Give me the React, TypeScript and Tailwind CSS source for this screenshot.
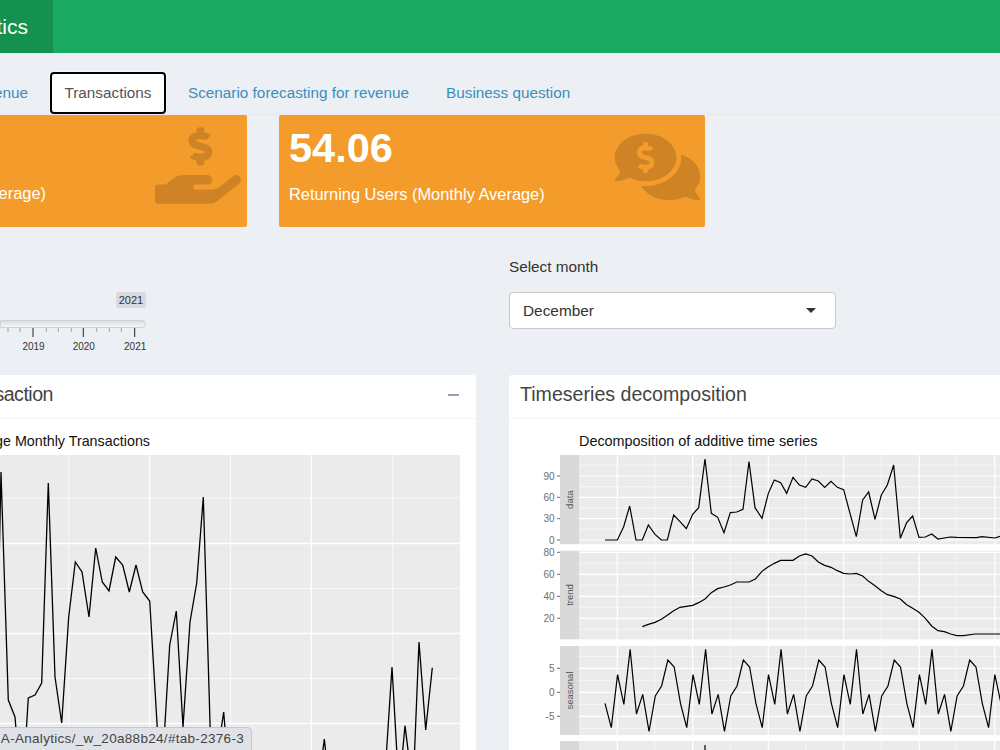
import { FaCommentsDollar, FaHandHoldingUsd } from 'react-icons/fa';

type Pt = [number, number];

const sans = 'font-["Liberation_Sans",Arial,sans-serif]';

// traced from the picture, page coordinates
const monthly: Pt[] = [
  [-5, 760], [1, 472], [8.3, 700], [15, 717], [21, 790], [26, 735], [28.3, 698], [35, 695], [41.7, 683], [48.3, 483],
  [55, 677], [61.7, 723], [68.7, 617], [75.3, 562], [82, 572], [89, 617], [95.7, 548], [102.3, 582], [109, 591],
  [115.7, 557], [122.7, 565], [129.3, 592], [136, 565], [142.7, 592], [149.7, 601], [161, 790], [169.7, 645],
  [176.3, 611], [183, 727], [190, 622], [196.7, 583], [203.3, 497], [212, 790], [223.7, 712], [230, 790],
  [318, 790], [324.3, 739], [330, 790], [384, 790], [392, 667], [399, 790], [405, 725.7], [413, 790], [419, 642],
  [425.7, 730], [432.3, 667.7],
];

// these two are in 3x units, from x=510 and y=430
const dataLine: Pt[] = [
  [285, 330], [322, 330], [341, 290], [359, 228], [378, 330], [397, 330], [415, 285], [435, 313], [454, 330], [472, 330],
  [491, 255], [510, 275], [529, 296], [548, 253], [566, 233], [585, 87], [604, 250], [623, 262], [642, 308], [661, 248],
  [680, 246], [699, 238], [717, 95], [735, 233], [756, 265], [775, 190], [793, 150], [812, 158], [830, 190], [849, 142],
  [868, 165], [887, 172], [906, 147], [925, 153], [944, 172], [963, 154], [982, 172], [1001, 179], [1020, 250], [1039, 320],
  [1058, 210], [1076, 186], [1095, 268], [1114, 195], [1132, 165], [1151, 105], [1171, 325], [1190, 278], [1208, 258],
  [1227, 322], [1246, 321], [1265, 312], [1284, 327], [1320, 321], [1340, 322], [1400, 323], [1415, 320], [1455, 324], [1470, 319],
];

const trendLine: Pt[] = [
  [397, 590], [415, 583], [435, 577], [454, 568], [472, 556], [491, 542], [510, 532], [529, 529], [548, 526], [566, 518],
  [585, 507], [604, 488], [623, 476], [642, 471], [661, 465], [680, 456], [717, 456], [736, 447], [756, 424], [775, 410],
  [793, 400], [812, 391], [849, 391], [868, 378], [887, 372], [906, 378], [925, 396], [944, 406], [963, 412], [982, 422],
  [1001, 430], [1020, 432], [1039, 430], [1058, 438], [1076, 454], [1095, 467], [1114, 482], [1132, 494], [1151, 499],
  [1171, 507], [1190, 524], [1208, 535], [1227, 547], [1246, 565], [1265, 588], [1284, 602], [1303, 605], [1322, 612],
  [1340, 617], [1360, 617], [1395, 612], [1470, 612],
];

const seasonStep: number[] = [340, 413, 254, 343, 178, 372, 313, 424, 318, 288, 210, 231];
const seasonal: Pt[] = Array.from({ length: 66 }, (_, i) => [605 + i * 6.288, 590 + seasonStep[i % 12] / 3]);

const toPage = (list: Pt[]): string => list.map(([x, y]) => `${510 + x / 3},${430 + y / 3}`).join(' ');

const toPts = (list: Pt[]): string => list.map(([x, y]) => `${x},${y}`).join(' ');

const majorX = [617.3, 692.7, 768.3, 843.7, 919.3, 994.7];
const minorX = [654.7, 730.3, 805.7, 881.3, 956.3];

type Facet = { name: string; top: number; bottom: number; major: [number, string][]; minor: number[] };

const facets: Facet[] = [
  {
    name: 'data',
    top: 455,
    bottom: 544.3,
    major: [[476, '90'], [497.3, '60'], [518.7, '30'], [540, '0']],
    minor: [465.3, 486.7, 508, 529.3],
  },
  {
    name: 'trend',
    top: 550.7,
    bottom: 639.3,
    major: [[552.3, '80'], [574.3, '60'], [596.3, '40'], [618.3, '20']],
    minor: [563.3, 585.3, 607.3, 629.3],
  },
  {
    name: 'seasonal',
    top: 646,
    bottom: 735,
    major: [[668.3, '5'], [692.3, '0'], [716.3, '-5']],
    minor: [656.3, 680.3, 704.3, 728.3],
  },
  { name: '', top: 741, bottom: 760, major: [], minor: [] },
];

function LeftChart() {
  return (
    <svg viewBox="0 455 460 295" className="block w-[460px] h-[295px]">
      <rect x="0" y="455" width="460" height="295" fill="#ebebeb" />
      {[498, 588.5, 678.5].map((y) => (
        <line key={y} x1="0" x2="460" y1={y} y2={y} stroke="#fff" strokeWidth="0.7" />
      ))}
      {[68.7, 230.5, 392.7].map((x) => (
        <line key={x} x1={x} x2={x} y1="455" y2="750" stroke="#fff" strokeWidth="0.7" />
      ))}
      {[543.5, 633.5, 723.5].map((y) => (
        <line key={y} x1="0" x2="460" y1={y} y2={y} stroke="#fff" strokeWidth="1.3" />
      ))}
      {[149.7, 311.3].map((x) => (
        <line key={x} x1={x} x2={x} y1="455" y2="750" stroke="#fff" strokeWidth="1.3" />
      ))}
      <polyline points={toPts(monthly)} fill="none" stroke="#000" strokeWidth="1.3" />
    </svg>
  );
}

function RightChart() {
  return (
    <svg viewBox="520 455 480 295" className={`block w-[480px] h-[295px] ${sans}`}>
      {facets.map((f) => (
        <g key={f.top}>
          <rect x="560" y={f.top} width="19" height={f.bottom - f.top} fill="#d9d9d9" />
          <rect x="579" y={f.top} width="421" height={f.bottom - f.top} fill="#ebebeb" />
          {f.minor.map((y) => (
            <line key={y} x1="579" x2="1000" y1={y} y2={y} stroke="#fff" strokeWidth="0.6" />
          ))}
          {minorX.map((x) => (
            <line key={x} x1={x} x2={x} y1={f.top} y2={f.bottom} stroke="#fff" strokeWidth="0.6" />
          ))}
          {f.major.map(([y, label]) => (
            <g key={label}>
              <line x1="579" x2="1000" y1={y} y2={y} stroke="#fff" strokeWidth="1.2" />
              <line x1="557" x2="560" y1={y} y2={y} stroke="#444" strokeWidth="0.8" />
              <text x="554.5" y={y + 3.5} textAnchor="end" fontSize="10" fill="#6f6f6f">
                {label}
              </text>
            </g>
          ))}
          {majorX.map((x) => (
            <line key={x} x1={x} x2={x} y1={f.top} y2={f.bottom} stroke="#fff" strokeWidth="1.2" />
          ))}
          {f.name && (
            <text
              transform={`translate(573 ${(f.top + f.bottom) / 2}) rotate(-90)`}
              textAnchor="middle"
              fontSize="9.5"
              fill="#555"
            >
              {f.name}
            </text>
          )}
        </g>
      ))}
      <polyline points={toPage(dataLine)} fill="none" stroke="#000" strokeWidth="1.2" />
      <polyline points={toPage(trendLine)} fill="none" stroke="#000" strokeWidth="1.2" />
      <polyline points={toPts(seasonal)} fill="none" stroke="#000" strokeWidth="1.2" />
      <polyline points="705,760 705,745" fill="none" stroke="#000" strokeWidth="1.2" />
    </svg>
  );
}

function SliderScale() {
  const major = [33, 83.3, 134.7];
  const minor = [8, 20, 46.3, 58.3, 71.3, 96.7, 109.3, 121.3];
  return (
    <svg viewBox="0 328 146 26" className={`block w-[146px] h-[26px] ${sans}`}>
      {minor.map((x) => (
        <line key={x} x1={x} x2={x} y1="328" y2="332" stroke="#8a8a8a" strokeWidth="0.8" />
      ))}
      {major.map((x) => (
        <line key={x} x1={x} x2={x} y1="328" y2="337" stroke="#222" strokeWidth="1" />
      ))}
      {['2019', '2020', '2021'].map((label, i) => (
        <text key={label} x={major[i] + 0.5} y="350" textAnchor="middle" fontSize="10" fill="#333">
          {label}
        </text>
      ))}
    </svg>
  );
}

export default function App() {
  return (
    <div className={`relative w-[1000px] h-[750px] overflow-hidden bg-[#ecf0f5] text-[#333] ${sans}`}>
      <header className="flex h-[53px] bg-[#1aa962]">
        <div className="flex justify-end items-center w-[53px] overflow-hidden bg-[#15914f] pr-[25px] shrink-0">
          <span className="text-[21px] font-light text-white whitespace-nowrap">Analytics</span>
        </div>
      </header>

      <nav className="flex h-[62px] pt-[18px] border-b border-[#e6e8eb] text-[15.3px] leading-[20px]">
        <div className="flex justify-end items-center w-[28px] overflow-hidden mr-[21px] shrink-0">
          <a className="text-[#3c8dbc] whitespace-nowrap">Revenue</a>
        </div>
        <a className="flex items-start h-[44px] w-[118px] justify-center rounded-t bg-[#ecf0f5] border border-[#f4f5f7] border-b-0 shrink-0">
          <span className="flex items-center justify-center w-[116px] h-[42px] bg-white rounded-[4px] border-2 border-black text-[#555]">
            Transactions
          </span>
        </a>
        <a className="ml-[21px] mt-[12px] text-[#3c8dbc] whitespace-nowrap">Scenario forecasting for revenue</a>
        <a className="ml-[37px] mt-[12px] text-[#3c8dbc] whitespace-nowrap">Business question</a>
      </nav>

      <section className="flex gap-x-[32px] h-[112px]">
        <div className="relative flex flex-col justify-end items-end w-[247px] rounded-r-[2px] bg-[#f39c2c] overflow-hidden shrink-0">
          <p className="mb-[24px] mr-[201px] text-[16.4px] leading-[20px] text-white whitespace-nowrap">Average)</p>
          <FaHandHoldingUsd className="absolute right-[6px] top-[10px] w-[86px] h-[81px] text-black/15" />
        </div>
        <div className="relative w-[426px] rounded-[2px] bg-[#f39c2c] text-white pl-[10px] shrink-0">
          <h3 className="mt-[10px] text-[41.5px] leading-[46px] font-bold">54.06</h3>
          <p className="mt-[13px] text-[16.4px] leading-[20px] whitespace-nowrap">Returning Users (Monthly Average)</p>
          <FaCommentsDollar className="absolute right-[0.5px] top-[13.5px] w-[95px] h-[76px] text-black/15" />
        </div>
      </section>

      <section className="grid grid-cols-[476px_1fr] gap-x-[33px] h-[148px]">
        <div className="pt-[65px]">
          <div className="flex justify-end w-[146px]">
            <span className="flex items-center justify-center w-[30px] h-[16px] rounded-[3px] bg-[#d8dadf] text-[11px] leading-none text-[#333]">
              2021
            </span>
          </div>
          <div className="mt-[12px] w-[146px] h-[8px] rounded-r-[4px] border border-[#d0d2d4] bg-gradient-to-b from-[#dcdee0] to-[#f6f6f6]" />
          <SliderScale />
        </div>
        <div className="pt-[30px]">
          <label className="block text-[15.3px] leading-[20px]">Select month</label>
          <div className="flex items-center justify-between mt-[15px] w-[327px] h-[37px] rounded-[4px] border border-[#c8c8c8] bg-white pl-[13px] pr-[19px] text-[15.4px]">
            <span>December</span>
            <span className="w-0 h-0 border-x-[5.5px] border-x-transparent border-t-[5.5px] border-t-[#333]" />
          </div>
        </div>
      </section>

      <section className="grid grid-cols-[476px_524px] gap-x-[33px]">
        <div className="h-[375px] bg-white rounded-tr-[3px]">
          <div className="flex items-center h-[44px] pb-[4px] border-b border-[#f4f4f4]">
            <div className="flex justify-end w-[53px] overflow-hidden shrink-0">
              <h3 className="text-[19.6px] tracking-[-0.5px] leading-none text-[#444] whitespace-nowrap">Monthly Transaction</h3>
            </div>
            <span className="ml-[395px] w-[11px] h-[2px] bg-[#97a0b3]" />
          </div>
          <div className="flex justify-end items-end w-[150px] h-[36px] pb-[7px] overflow-hidden text-[14.3px] leading-none text-[#111]">
            <span className="whitespace-nowrap">Average Monthly Transactions</span>
          </div>
          <LeftChart />
        </div>
        <div className="h-[375px] bg-white rounded-tl-[3px]">
          <div className="flex items-center h-[44px] pb-[4px] border-b border-[#f4f4f4] pl-[11px]">
            <h3 className="text-[19.6px] leading-none text-[#444] whitespace-nowrap">Timeseries decomposition</h3>
          </div>
          <div className="flex items-end h-[36px] pb-[7px] pl-[70px] text-[14.4px] leading-none text-[#111]">
            Decomposition of additive time series
          </div>
          <div className="pl-[11px]">
            <RightChart />
          </div>
        </div>
      </section>

      <div className="absolute left-0 bottom-0 flex justify-end items-center w-[252px] h-[23px] overflow-hidden rounded-tr-[5px] border-t border-r border-[#c3c6cb] bg-[#dfe2e7] pr-[7px] text-[13.5px] tracking-[0.3px] text-[#444]">
        <span className="whitespace-nowrap">A-Analytics/_w_20a88b24/#tab-2376-3</span>
      </div>
    </div>
  );
}
